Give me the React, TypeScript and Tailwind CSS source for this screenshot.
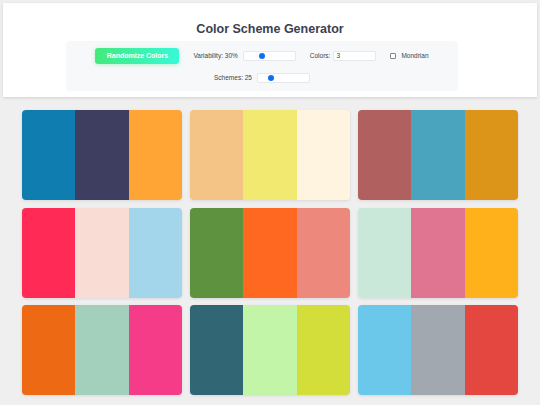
import React from 'react';

const schemes: string[][] = [
  ['#0f7db0', '#3d3e60', '#ffa535'],
  ['#f4c487', '#f2e971', '#fff4df'],
  ['#b0605e', '#4aa4bd', '#dc9519'],
  ['#ff2a56', '#f9ddd4', '#a3d5eb'],
  ['#5f923e', '#ff6821', '#ec897c'],
  ['#c9e8da', '#e07592', '#ffb11b'],
  ['#ee6913', '#a3cfbd', '#f43c88'],
  ['#316674', '#c3f5a9', '#d4de3b'],
  ['#6cc8eb', '#a1a8b0', '#e4473f'],
];

const Slider: React.FC<{ pos: number; width: string }> = ({ pos, width }) => (
  <div className={`relative h-[10px] ${width} rounded-[2px] border border-[#e6e8ec] bg-white`}>
    <div
      className="absolute top-1/2 h-[6px] w-[6px] -translate-y-1/2 rounded-full bg-[#0b6ff5]"
      style={{ left: pos }}
    />
  </div>
);

export default function App() {
  return (
    <div className="min-h-screen bg-[#efefef] p-[3px] font-['Liberation_Sans',Arial,sans-serif]">
      <div className="flex flex-col items-center bg-white pt-[19px] pb-[6px] shadow-[0_1px_3px_rgba(0,0,0,0.12)]">
        <h1 className="text-[12.5px] font-bold leading-[14px] text-[#3b4150]">Color Scheme Generator</h1>
        <div className="mt-[5px] flex w-[392px] -translate-x-[8px] flex-col items-center gap-[9px] rounded-[4px] bg-[#f7f8fa] pt-[7px] pb-[8px] text-[6.5px] text-[#444]">
          <div className="flex items-center gap-[14px]">
            <button className="h-[16px] w-[84px] rounded-[3px] bg-gradient-to-r from-[#43e97b] to-[#38f9d7] text-[7px] font-bold text-white shadow-[0_1px_4px_rgba(67,233,123,0.35)]">
              Randomize Colors
            </button>
            <div className="flex items-center gap-[5px]">
              <span>Variability: 30%</span>
              <Slider pos={15} width="w-[53px]" />
            </div>
            <div className="flex items-center gap-[3px]">
              <span>Colors:</span>
              <div className="flex h-[10px] w-[43px] items-center rounded-[2px] border border-[#e6e8ec] bg-white pl-[2px]">3</div>
            </div>
            <div className="flex items-center gap-[5px]">
              <div className="h-[6px] w-[6px] rounded-[1px] border border-[#888] bg-white" />
              <span>Mondrian</span>
            </div>
          </div>
          <div className="flex items-center gap-[5px]">
            <span>Schemes: 25</span>
            <Slider pos={10} width="w-[53px]" />
          </div>
        </div>
      </div>
      <div className="mx-auto mt-[13px] grid w-[496px] grid-cols-3 gap-x-[8px] gap-y-[7.5px]">
        {schemes.map((s, i) => (
          <div key={i} className="flex h-[90px] overflow-hidden rounded-[4px] shadow-[0_1px_3px_rgba(0,0,0,0.1)]">
            {s.map((c, j) => (
              <div key={j} className="flex-1" style={{ backgroundColor: c }} />
            ))}
          </div>
        ))}
      </div>
    </div>
  );
}
